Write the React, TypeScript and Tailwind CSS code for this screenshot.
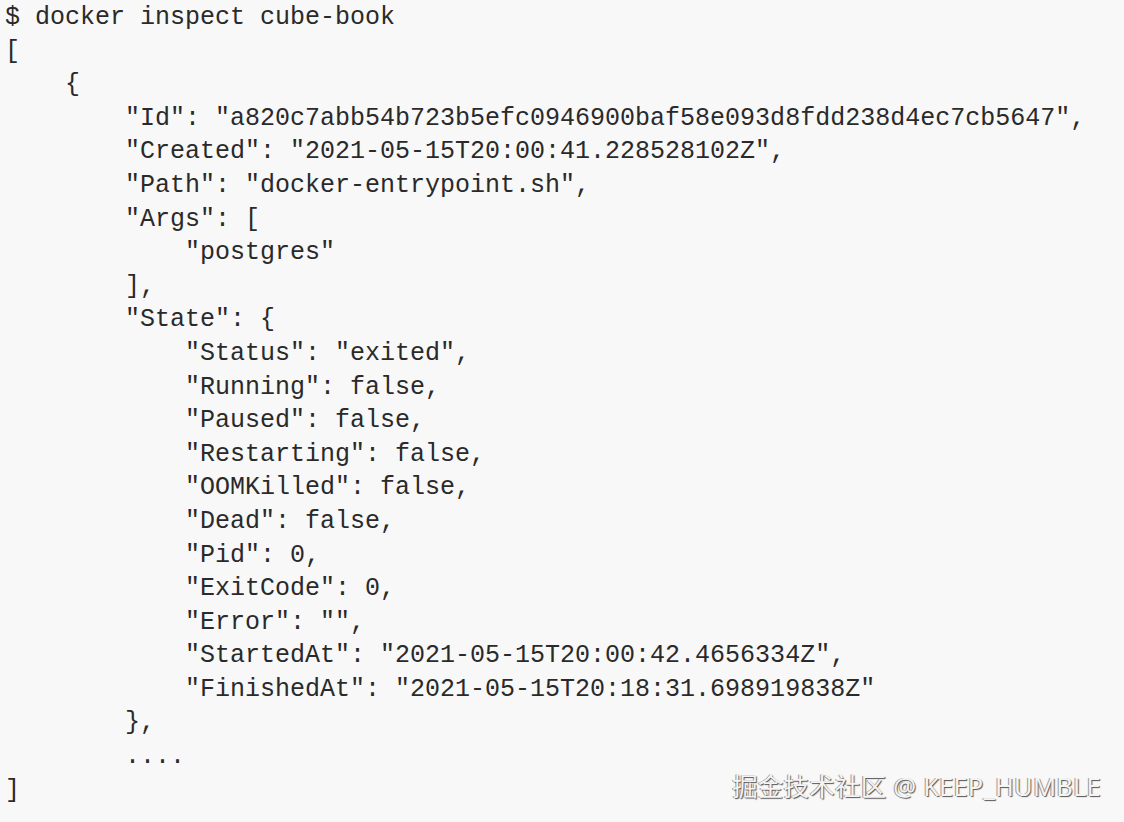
import React from 'react'

const lines = [
  '$ docker inspect cube-book',
  '[',
  '    {',
  '        "Id": "a820c7abb54b723b5efc0946900baf58e093d8fdd238d4ec7cb5647",',
  '        "Created": "2021-05-15T20:00:41.228528102Z",',
  '        "Path": "docker-entrypoint.sh",',
  '        "Args": [',
  '            "postgres"',
  '        ],',
  '        "State": {',
  '            "Status": "exited",',
  '            "Running": false,',
  '            "Paused": false,',
  '            "Restarting": false,',
  '            "OOMKilled": false,',
  '            "Dead": false,',
  '            "Pid": 0,',
  '            "ExitCode": 0,',
  '            "Error": "",',
  '            "StartedAt": "2021-05-15T20:00:42.4656334Z",',
  '            "FinishedAt": "2021-05-15T20:18:31.698919838Z"',
  '        },',
  '        ....',
  ']',
]

export default function App() {
  return (
    <div className="relative w-[1124px] h-[822px] overflow-hidden bg-[#f8f8f8]">
      <div className="flex flex-col items-start pl-[5px] pt-[1px] text-[25px] leading-[33.6px] text-[#2a2a2a] font-['Liberation_Mono','Courier_New',monospace]">
        {lines.map((line, i) => (
          <div key={i} className="whitespace-pre h-[33.6px]">{line}</div>
        ))}
      </div>
      <div className="absolute right-[23px] bottom-[21px] text-[25.5px] leading-[30px] tracking-[0.2px] text-[#f4f4f4] font-['Noto_Sans','Noto_Sans_CJK_SC',sans-serif] [text-shadow:1px_1px_1px_#555,-1px_0_0_#999]">
        掘金技术社区 @ KEEP_HUMBLE
      </div>
    </div>
  )
}
